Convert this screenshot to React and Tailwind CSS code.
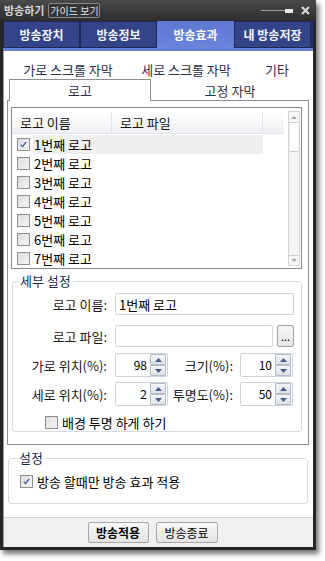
import React from "react";

function CheckBox({ checked }) {
  return (
    <span className="w-[13px] h-[13px] border border-[#8f8f8f] bg-gradient-to-br from-[#d6d6d6] to-[#fafafa] flex items-center justify-center shrink-0 p-[1px]">
      <span className="w-full h-full border border-[#e8e8e8] bg-gradient-to-br from-[#dcdcdc] to-[#f6f6f6] flex items-center justify-center">
        {checked && (
          <svg width="9" height="9" viewBox="0 0 9 9">
            <path d="M1 4.8 L3.4 7.2 L8 1.2" stroke="#4a5a9e" strokeWidth="1.7" fill="none" />
          </svg>
        )}
      </span>
    </span>
  );
}

function SpinBtn({ up }) {
  return (
    <span className="w-[16px] h-[11px] border border-[#b5bcc6] rounded-[1px] bg-gradient-to-b from-[#f4f6f8] to-[#dde2e8] flex items-center justify-center">
      <svg width="7" height="4" viewBox="0 0 7 4">
        {up ? <path d="M0 4 L3.5 0 L7 4 Z" fill="#4b5b8c" /> : <path d="M0 0 L3.5 4 L7 0 Z" fill="#4b5b8c" />}
      </svg>
    </span>
  );
}

function Spin({ value }) {
  return (
    <div className="w-[53px] h-[24px] border border-[#cdd3da] rounded-[2px] bg-white flex items-center">
      <span className="flex-1 text-right pr-[3px] text-[12px] leading-none text-black">{value}</span>
      <span className="flex flex-col mr-[1px]">
        <SpinBtn up />
        <SpinBtn />
      </span>
    </div>
  );
}

function Label({ children, w = "w-[94px]" }) {
  return <span className={`${w} text-right text-[13px] leading-none text-[#1a1a1a] shrink-0 whitespace-nowrap`}>{children}</span>;
}

const rows = [1, 2, 3, 4, 5, 6, 7];

export default function App() {
  return (
    <div className="w-[325px] h-[561px] bg-white font-['Noto_Sans_CJK_KR',sans-serif]">
      <div className="w-[316px] h-[550px] bg-[#262626] flex flex-col shadow-[3px_4px_5px_rgba(0,0,0,0.55)]">
        {/* title bar */}
        <div className="h-[21px] flex items-center px-[4px] bg-gradient-to-b from-[#4a4a4a] to-[#2e2e2e]">
          <span className="text-[11px] font-bold text-[#d6d6d6] leading-none whitespace-nowrap">방송하기</span>
          <span className="ml-[4px] h-[15px] w-[52px] border border-[#8a8a8a] rounded-[2px] bg-[#353535] text-[10px] text-[#e2e2e2] leading-none flex items-center justify-center whitespace-nowrap">
            가이드 보기
          </span>
          <span className="ml-auto flex items-center">
            <span className="w-[24px] h-[1px] bg-[#a0a0a0]" />
            <span className="w-[8px] h-[4px] bg-[#e6e6e6]" />
          </span>
          <span className="ml-[8px] mr-[2px]">
            <svg width="9" height="9" viewBox="0 0 9 9">
              <path d="M1 1 L8 8 M8 1 L1 8" stroke="#d8d8d8" strokeWidth="2.2" />
            </svg>
          </span>
        </div>
        {/* main tab bar */}
        <div className="mx-[3px] h-[30px] bg-[#23306a] flex flex-col">
          <div className="flex h-[27px]">
            {["방송장치", "방송정보", "방송효과", "내 방송저장"].map((t, i) => (
              <div
                key={t}
                className={
                  i === 2
                    ? "w-[77px] flex items-center justify-center bg-gradient-to-b from-[#5f78d2] to-[#6a84dc] text-white text-[12px] font-bold leading-none"
                    : "w-[77px] flex items-center justify-center bg-[#334489] border border-[#1c275a] text-[#f2f4ff] text-[12px] font-bold leading-none"
                }
              >
                {t}
              </div>
            ))}
          </div>
          <div className="h-[3px] bg-[#6580da]" />
        </div>
        {/* content */}
        <div className="mx-[3px] flex-1 bg-white flex flex-col border-l border-[#9a9a9a]">
          <div className="mt-[8px] ml-[3px] w-[302px] flex flex-col">
            {/* tab row 1 */}
            <div className="h-[20px] flex items-center text-[13px] text-[#2a2f48] leading-none pl-[2px] whitespace-nowrap">
              <span className="w-[118px] text-center">가로 스크롤 자막</span>
              <span className="w-[118px] text-center">세로 스크롤 자막</span>
              <span className="w-[64px] text-center">기타</span>
            </div>
            {/* tab row 2 */}
            <div className="h-[21px] flex pl-[2px] text-[13px] text-[#2a2f48] leading-none">
              <div className="w-[142px] h-[22px] border border-b-0 border-[#8c8e94] bg-white flex items-center justify-center relative z-10">
                로고
              </div>
              <div className="flex-1 flex items-center justify-center pt-[2px]">고정 자막</div>
            </div>
            {/* panel */}
            <div className="h-[345px] border border-[#8c8e94] flex flex-col">
              {/* list */}
              <div className="mt-[6px] ml-[3px] w-[291px] h-[162px] border border-[#828790] bg-white flex">
                <div className="flex-1 flex flex-col pt-[3px]">
                  <div className="h-[23px] flex text-[13px] leading-none text-[#111] bg-gradient-to-b from-white to-[#eef0f3] border-b border-[#e2e5ea] mr-[4px]">
                    <div className="w-[100px] flex items-center pl-[8px] border-r border-[#e0e3e8]">로고 이름</div>
                    <div className="w-[151px] flex items-center pl-[8px] border-r border-[#e0e3e8]">로고 파일</div>
                    <div className="flex-1" />
                  </div>
                  <div className="flex flex-col overflow-hidden pt-[1px]">
                    {rows.map((n) => (
                      <div key={n} className="h-[19px] flex items-center shrink-0">
                        <span className="ml-[5px]">
                          <CheckBox checked={n === 1} />
                        </span>
                        <span
                          className={`ml-[3px] w-[230px] h-[19px] flex items-center pl-[1px] text-[13px] leading-none text-black ${
                            n === 1 ? "bg-[#efefef]" : ""
                          }`}
                        >
                          {n}번째 로고
                        </span>
                      </div>
                    ))}
                  </div>
                </div>
                {/* scrollbar */}
                <div className="w-[12px] mt-[3px] mb-[2px] mr-[1px] border border-[#d4d4d4] bg-[#f3f3f3] flex flex-col">
                  <div className="h-[11px] border-b border-[#cfcfcf] bg-[#f7f7f7] flex items-center justify-center">
                    <svg width="6" height="3" viewBox="0 0 6 3">
                      <path d="M0 3 L3 0 L6 3 Z" fill="#a8a8a8" />
                    </svg>
                  </div>
                  <div className="h-[29px] border-b border-[#cfcfcf] bg-white mx-[1px]" />
                  <div className="flex-1" />
                  <div className="h-[10px] border-t border-[#cfcfcf] bg-[#f7f7f7] flex items-center justify-center">
                    <svg width="6" height="3" viewBox="0 0 6 3">
                      <path d="M0 0 L3 3 L6 0 Z" fill="#a8a8a8" />
                    </svg>
                  </div>
                </div>
              </div>
              {/* detail group */}
              <fieldset className="mt-[5px] ml-[4px] w-[290px] h-[158px] border border-[#d5dde4] rounded-[3px] px-0 pb-0">
                <legend className="ml-[5px] px-[2px] text-[13px] leading-[14px] text-[#1a2a4a]">세부 설정</legend>
                <div className="flex flex-col">
                  <div className="mt-[5px] flex items-center">
                    <Label>로고 이름:</Label>
                    <div className="ml-[8px] w-[179px] h-[22px] border border-[#cfd5dc] rounded-[2px] flex items-center pl-[3px] text-[13px] leading-none text-black">
                      1번째 로고
                    </div>
                  </div>
                  <div className="mt-[10px] flex items-center">
                    <Label>로고 파일:</Label>
                    <div className="ml-[8px] w-[158px] h-[22px] border border-[#cfd5dc] rounded-[2px]" />
                    <div className="ml-[4px] w-[17px] h-[22px] border border-[#a3a3a3] rounded-[2px] bg-gradient-to-b from-[#f6f6f6] to-[#e4e4e4] flex items-end justify-center pb-[4px] text-[11px] leading-none text-black">
                      ...
                    </div>
                  </div>
                  <div className="mt-[6px] flex items-center">
                    <Label>가로 위치(%):</Label>
                    <div className="ml-[8px]">
                      <Spin value="98" />
                    </div>
                    <Label w="w-[65px]">크기(%):</Label>
                    <div className="ml-[7px]">
                      <Spin value="10" />
                    </div>
                  </div>
                  <div className="mt-[5px] flex items-center">
                    <Label>세로 위치(%):</Label>
                    <div className="ml-[8px]">
                      <Spin value="2" />
                    </div>
                    <Label w="w-[65px]">투명도(%):</Label>
                    <div className="ml-[7px]">
                      <Spin value="50" />
                    </div>
                  </div>
                  <div className="mt-[10px] ml-[32px] flex items-center">
                    <CheckBox />
                    <span className="ml-[4px] text-[13px] leading-none text-black">배경 투명 하게 하기</span>
                  </div>
                </div>
              </fieldset>
            </div>
          </div>
          {/* settings group */}
          <fieldset className="mt-[6px] ml-[4px] w-[300px] h-[53px] border border-[#d5dde4] rounded-[3px] px-0 pb-0">
            <legend className="ml-[8px] px-[2px] text-[13px] leading-[14px] text-[#1a2a4a]">설정</legend>
            <div className="mt-[10px] ml-[11px] flex items-center">
              <CheckBox checked />
              <span className="ml-[4px] text-[13px] leading-none text-black">방송 할때만 방송 효과 적용</span>
            </div>
          </fieldset>
          <div className="flex-1" />
          <div className="h-[30px] bg-[#f0f0f0] border-t border-[#cfd3d8] flex items-center justify-center gap-[7px] pr-[12px]">
            <div className="w-[61px] h-[21px] border border-[#a7a7a7] rounded-[2px] bg-gradient-to-b from-[#f8f8f8] to-[#e3e3e3] flex items-center justify-center text-[12px] font-bold leading-none text-black">
              방송적용
            </div>
            <div className="w-[62px] h-[21px] border border-[#a7a7a7] rounded-[2px] bg-gradient-to-b from-[#f8f8f8] to-[#e3e3e3] flex items-center justify-center text-[12px] leading-none text-black">
              방송종료
            </div>
          </div>
        </div>
        <div className="h-[3px]" />
      </div>
    </div>
  );
}
